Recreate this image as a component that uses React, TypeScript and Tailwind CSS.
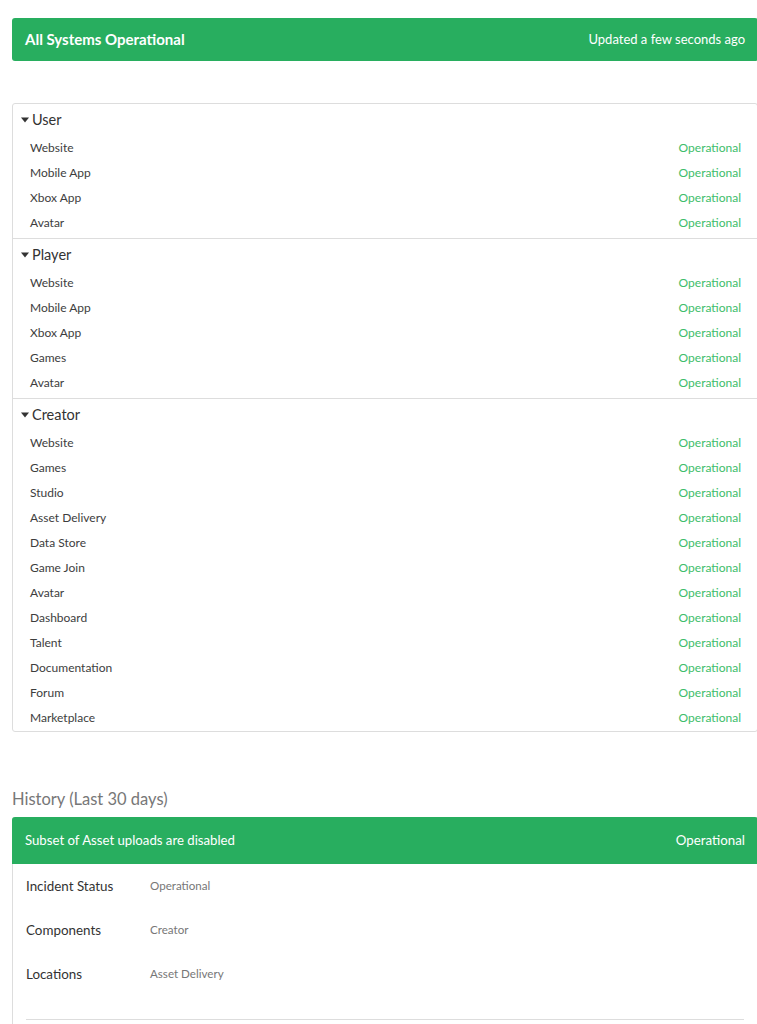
const groups: { name: string; items: string[] }[] = [
  { name: "User", items: ["Website", "Mobile App", "Xbox App", "Avatar"] },
  { name: "Player", items: ["Website", "Mobile App", "Xbox App", "Games", "Avatar"] },
  {
    name: "Creator",
    items: [
      "Website",
      "Games",
      "Studio",
      "Asset Delivery",
      "Data Store",
      "Game Join",
      "Avatar",
      "Dashboard",
      "Talent",
      "Documentation",
      "Forum",
      "Marketplace",
    ],
  },
];

const details = [
  { label: "Incident Status", value: "Operational" },
  { label: "Components", value: "Creator" },
  { label: "Locations", value: "Asset Delivery" },
];

function Caret() {
  return (
    <svg width="8" height="6" viewBox="0 0 8 6" className="mr-[3px]">
      <path d="M0 0.5 L8 0.5 L4 5.5 Z" fill="#333" />
    </svg>
  );
}

export default function App() {
  return (
    <div className="w-[757px] overflow-hidden bg-white text-[#333]" style={{ fontFamily: "Lato, 'Open Sans', sans-serif" }}>
      <div className="w-[746px] ml-[12px] pt-[18px] pb-[40px]">
        {/* overall status */}
        <div className="h-[43px] rounded-[3px] bg-[#28ae5f] text-white flex items-center justify-between px-[13px]">
          <span className="text-[15px] font-bold">All Systems Operational</span>
          <span className="text-[13px]">Updated a few seconds ago</span>
        </div>

        {/* components */}
        <div className="mt-[42px] border border-[#dddddd] rounded-[3px]">
          {groups.map((g, gi) => (
            <div key={g.name} className={gi > 0 ? "border-t border-[#dddddd]" : ""}>
              <div className="h-[31px] flex items-center pl-[8px] text-[14.5px] text-[#333]">
                <Caret />
                {g.name}
              </div>
              <div className={gi === groups.length - 1 ? "pb-[1px]" : "pb-[3px]"}>
                {g.items.map((item, i) => (
                  <div key={i} className="h-[25px] flex items-center justify-between pl-[17px] pr-[16px] text-[12px]">
                    <span className="text-[#3d3d3d]">{item}</span>
                    <span className="text-[#3dbd6a]">Operational</span>
                  </div>
                ))}
              </div>
            </div>
          ))}
        </div>

        {/* history */}
        <h2 className="mt-[55px] text-[16.5px] leading-[24px] text-[#777] font-normal">History (Last 30 days)</h2>
        <div className="mt-[6px] border-l border-r border-[#dddddd] rounded-t-[3px]">
          <div className="h-[47px] bg-[#28ae5f] text-white flex items-center justify-between px-[13px] rounded-t-[3px] -mx-px">
            <span className="text-[13.2px]">Subset of Asset uploads are disabled</span>
            <span className="text-[13.3px]">Operational</span>
          </div>
          <div className="px-[13px]">
            <div className="pb-[23px]">
              {details.map((d) => (
                <div key={d.label} className="h-[44px] flex items-center">
                  <span className="w-[124px] text-[13.4px] text-[#333]">{d.label}</span>
                  <span className="text-[11.6px] text-[#777] -mt-[1px]">{d.value}</span>
                </div>
              ))}
            </div>
            <div className="border-t border-[#dddddd] h-[20px]" />
          </div>
        </div>
      </div>
    </div>
  );
}
